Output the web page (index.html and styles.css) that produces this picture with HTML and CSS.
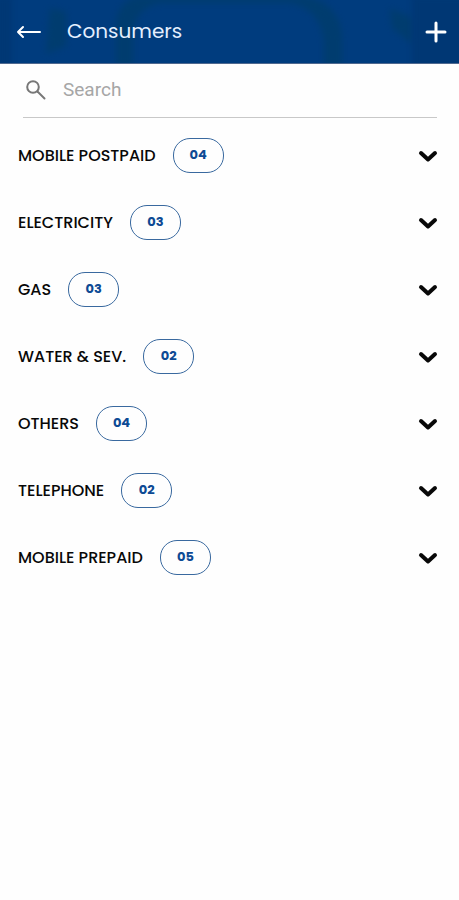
FILE: index.html
```html
<!DOCTYPE html>
<html lang="en">
<head>
<meta charset="utf-8">
<meta name="viewport" content="width=device-width, initial-scale=1">
<title>Consumers</title>
<link rel="stylesheet" href="styles.css">
</head>
<body>
<header class="bar">
  <svg class="bar-art" viewBox="0 0 459 63" preserveAspectRatio="none" aria-hidden="true">
    <path class="shade" d="M50 8L66 12V46L46 54z"/>
    <path class="shade" d="M116 66V24Q118 0 140 -4H305Q342 4 342 40V66H324V42Q320 8 290 3H160Q134 8 133 36V66Z"/>
    <path class="shade" d="M390 8l22 10v26l-20-16z"/>
    <path class="deep" d="M412 -5h55v73h-55zM-5 -5H12V68H-5z"/>
  </svg>
  <button class="icon-button" type="button" aria-label="Back">
    <svg width="25" height="16" viewBox="0 0 25 16"><path d="M24 8H2M7 3L2 8L7 13"/></svg>
  </button>
  <h1 class="title">Consumers</h1>
  <button class="icon-button" type="button" aria-label="Add consumer">
    <svg class="plus" width="22" height="22" viewBox="0 0 22 22"><path d="M11 2v18M2 11h18"/></svg>
  </button>
</header>
<main>
  <form class="search" role="search">
    <label class="search-label" for="search" aria-label="Search">
      <svg width="20" height="20" viewBox="0 0 20 20"><circle cx="7" cy="7" r="5.800"/><path d="M11.500 11.500l7 7"/></svg>
    </label>
    <input class="search-input" id="search" type="search" placeholder="Search">
  </form>
  <ul class="list">
    <li><button class="row" type="button" aria-expanded="false"><span class="name">MOBILE POSTPAID</span><span class="count">04</span><svg class="chevron" width="20" height="14" viewBox="0 0 20 14"><path d="M3 4l7 6.500l7-6.500"/></svg></button></li>
    <li><button class="row" type="button" aria-expanded="false"><span class="name">ELECTRICITY</span><span class="count">03</span><svg class="chevron" width="20" height="14" viewBox="0 0 20 14"><path d="M3 4l7 6.500l7-6.500"/></svg></button></li>
    <li><button class="row" type="button" aria-expanded="false"><span class="name">GAS</span><span class="count">03</span><svg class="chevron" width="20" height="14" viewBox="0 0 20 14"><path d="M3 4l7 6.500l7-6.500"/></svg></button></li>
    <li><button class="row" type="button" aria-expanded="false"><span class="name">WATER &amp; SEV.</span><span class="count">02</span><svg class="chevron" width="20" height="14" viewBox="0 0 20 14"><path d="M3 4l7 6.500l7-6.500"/></svg></button></li>
    <li><button class="row" type="button" aria-expanded="false"><span class="name">OTHERS</span><span class="count">04</span><svg class="chevron" width="20" height="14" viewBox="0 0 20 14"><path d="M3 4l7 6.500l7-6.500"/></svg></button></li>
    <li><button class="row" type="button" aria-expanded="false"><span class="name">TELEPHONE</span><span class="count">02</span><svg class="chevron" width="20" height="14" viewBox="0 0 20 14"><path d="M3 4l7 6.500l7-6.500"/></svg></button></li>
    <li><button class="row" type="button" aria-expanded="false"><span class="name">MOBILE PREPAID</span><span class="count">05</span><svg class="chevron" width="20" height="14" viewBox="0 0 20 14"><path d="M3 4l7 6.500l7-6.500"/></svg></button></li>
  </ul>
</main>
</body>
</html>
```
FILE: styles.css
```css
* {
  box-sizing: border-box;
}

body {
  margin: 0;
  background: #fefefe;
  color: #080808;
  font-family: Poppins, Inter, sans-serif;
}

button,
input {
  border: 0;
  padding: 0;
  background: none;
  color: inherit;
  font: inherit;
}

button {
  cursor: pointer;
}

svg {
  display: block;
  fill: none;
  stroke: currentColor;
  stroke-linecap: round;
  stroke-linejoin: round;
}

.bar {
  position: relative;
  display: flex;
  align-items: center;
  height: 64px;
  padding: 0 12px 0 16px;
  border-bottom: 1px solid #50698f;
  background: #003c7e;
  color: #fff;
}

.bar-art {
  position: absolute;
  inset: 0;
  width: 100%;
  height: 100%;
  stroke: none;
}

.shade,
.deep {
  filter: blur(3px);
}

.shade {
  fill: #003d6a;
  opacity: 0.75;
}

.deep {
  fill: #003671;
  opacity: 0.7;
}

.icon-button {
  position: relative;
  stroke-width: 2;
}

.plus {
  stroke-width: 3;
}

.title {
  position: relative;
  flex: 1;
  margin: 0;
  padding: 0 0 2px 26px;
  color: #e4efff;
  font-size: 20px;
  font-weight: 400;
  line-height: 24px;
}

.search {
  display: flex;
  align-items: center;
  gap: 17px;
  height: 54px;
  margin: 0 22px 0 23px;
  padding: 0 0 1px 3px;
  border-bottom: 1px solid #c8c8c8;
}

.search-label {
  color: #777;
  stroke-width: 2;
}

.search-input {
  flex: 1;
  min-width: 0;
  outline: 0;
  font-family: Roboto, sans-serif;
  font-size: 19px;
  line-height: 24px;
}

.search-input::placeholder {
  color: #a6a6a6;
}

.list {
  margin: 0;
  padding: 4px 0;
  list-style: none;
}

.row {
  display: flex;
  align-items: center;
  gap: 17px;
  width: 100%;
  height: 67px;
  padding: 0 21px 0 18px;
  font-size: 16px;
  font-weight: 500;
  text-align: left;
}

.name {
  padding-bottom: 1px;
}

.count {
  min-width: 51px;
  padding-bottom: 1px;
  border: 1px solid #39699f;
  border-radius: 17px;
  color: #0d4a94;
  font-size: 13px;
  font-weight: 700;
  line-height: 32px;
  text-align: center;
}

.chevron {
  margin-left: auto;
  stroke-width: 4;
}
```
